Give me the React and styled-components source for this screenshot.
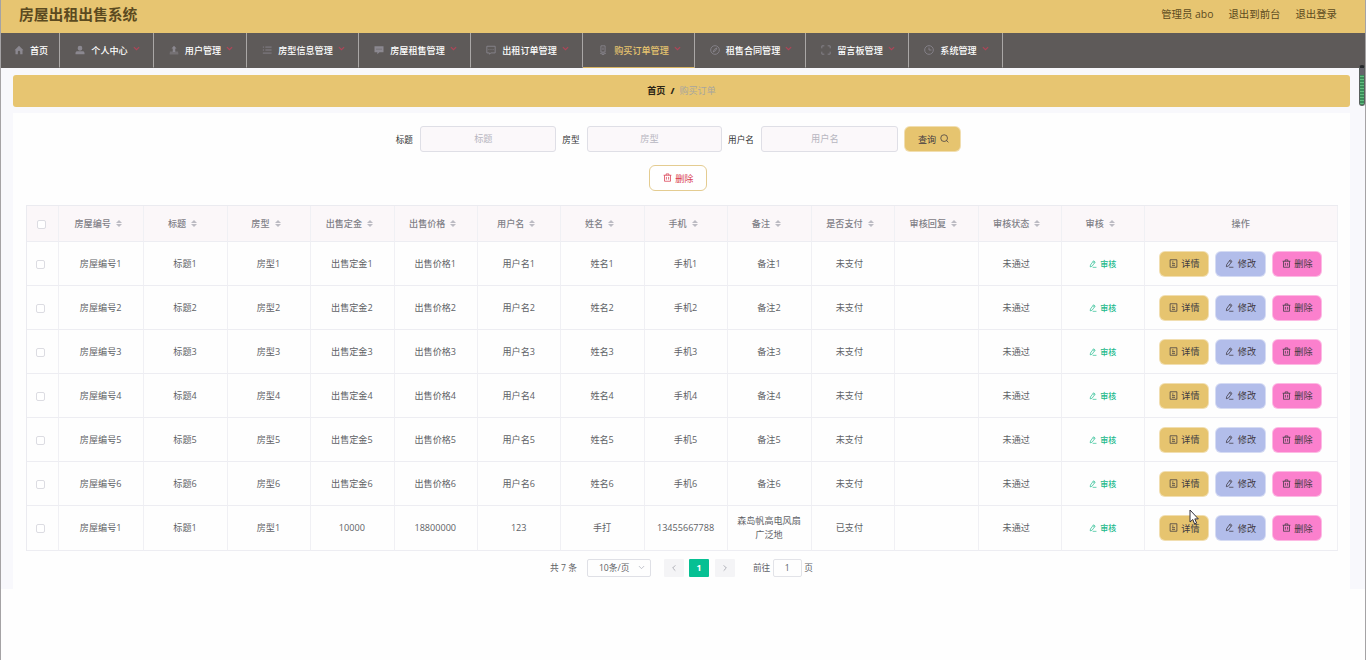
import React from 'react';
import styled, { createGlobalStyle, css } from 'styled-components';

const GlobalStyle = createGlobalStyle`
    * {
        box-sizing: border-box;
    }

    body {
        margin: 0;
        background: #fefefe;
        color: #606266;
        font-family: "Open Sans", "Noto Sans CJK SC", sans-serif;
        font-size: 9.1px;
        overflow: hidden;
    }

    button, input {
        font-family: inherit;
        font-size: inherit;
    }
`;

const menus = [
    { title: '首页', icon: 'home', width: 59 },
    { title: '个人中心', icon: 'user', width: 94 },
    { title: '用户管理', icon: 'upload', width: 93 },
    { title: '房型信息管理', icon: 'list', width: 112 },
    { title: '房屋租售管理', icon: 'chat', width: 112 },
    { title: '出租订单管理', icon: 'message', width: 112 },
    { title: '购买订单管理', icon: 'phone', width: 112, active: true },
    { title: '租售合同管理', icon: 'compass', width: 111 },
    { title: '留言板管理', icon: 'full', width: 103 },
    { title: '系统管理', icon: 'clock', width: 94 }
];

const headers = [
    '房屋编号', '标题', '房型', '出售定金', '出售价格', '用户名', '姓名',
    '手机', '备注', '是否支付', '审核回复', '审核状态', '审核'
];

const orders = [1, 2, 3, 4, 5, 6].map(n => [
    `房屋编号${n}`, `标题${n}`, `房型${n}`, `出售定金${n}`, `出售价格${n}`, `用户名${n}`,
    `姓名${n}`, `手机${n}`, `备注${n}`, '未支付', '', '未通过'
]);

orders.push([
    '房屋编号1', '标题1', '房型1', '10000', '18800000', '123',
    '手打', '13455667788', '森岛帆高电风扇广泛地', '已支付', '', '未通过'
]);

const icons = {
    home: <path fill="currentColor" stroke="none" d="M6 1 .6 6.200h1.200v5h2.800V8.200a1.400 1.400 0 0 1 2.800 0v3h2.800v-5h1.200z" />,
    user: <path fill="currentColor" stroke="none" d="M6 1a2.800 2.800 0 0 1 2.800 2.900A2.800 2.800 0 0 1 6 6.800a2.800 2.800 0 0 1-2.800-2.900A2.800 2.800 0 0 1 6 1zM.6 11V9.600C.6 8 2 7.500 3.500 7.500h5c1.500 0 2.900.5 2.900 2.100V11z" />,
    upload: <path fill="currentColor" stroke="none" d="M6 .8 9 4.200H7.500V8H11v1H1V8h3.500V4.200H3zM.8 10.200h10.400v1H.8z" />,
    list: <path d="M1 2.500h1.500M4 2.500h7.500M1 6h1.500M4 6h7.500M1 9.700h10.500" />,
    chat: <><path fill="currentColor" stroke="none" d="M.6 1.500h10.800v7.200H6.500L4 11V8.700H.6z" /><path stroke="#5e5a59" d="M3 5h1.200M5.400 5h1.200M7.800 5H9" /></>,
    message: <path d="M1 1.500h10v8H6L4 11V9.500H1zM3 5.500h1M5.500 5.500h1M8 5.500h1" />,
    phone: <path d="M3.500 1h5v7.500h-5zM2.500 10H5M9.500 10H7M6 8.500V11M4.500 11.300h3M6 3v3" />,
    compass: <><circle cx="6" cy="6" r="5.200" /><path d="M8.300 3.500 6.700 6.700 3.700 8.500 5.300 5.300z" /></>,
    full: <path d="M1 4V1h3M8 1h3v3M11 8v3H8M4 11H1V8" />,
    clock: <><circle cx="6" cy="6" r="5.200" /><path d="M6 3v3h3" /></>,
    search: <><circle cx="5.500" cy="5.500" r="4.500" /><path d="m8.700 8.700 2.500 2.500" /></>,
    trash: <path d="M.8 3h10.400M2 3v8h8V3M4.200 3V1.200h3.600V3M4.500 5.200v3.600M7.500 5.200v3.600" />,
    doc: <path d="M1.500 1h9v10h-9zM4 4h2M4 6.200h4M4 8.500h4" />,
    edit: <path d="m2.200 7.500 4.600-6.300 2.500 1.800-4.600 6.300-2.900 1zM5.800 2.600l2.500 1.800M5.500 11h5.700" />,
    down: <path d="m1.500 3.500 4.500 4.500 4.500-4.500" />,
    left: <path d="M8 2 4 6l4 4" />,
    right: <path d="m4 2 4 4-4 4" />
};

const Svg = styled.svg`
    width: ${props => props.$size}px;
    height: ${props => props.$size}px;
    flex: none;
    fill: none;
    stroke: currentColor;
    stroke-width: ${props => props.$stroke};
`;

const Icon = ({ name, size = 9, stroke = 1 }) => (
    <Svg viewBox="0 0 12 12" $size={size} $stroke={stroke}>{icons[name]}</Svg>
);

const Page = styled.div`
    height: 660px;
    border-left: 1px solid #a5a3a5;
    border-right: 1px solid #a5a3a5;
    position: relative;
`;

const Header = styled.header`
    height: 33px;
    padding: 0 28px 6px 18px;
    display: flex;
    align-items: center;
    justify-content: space-between;
    background: #e7c571;
    color: #5b4a20;
`;

const Title = styled.h1`
    margin: 0;
    font-size: 14.800px;
    font-weight: 600;
    line-height: 26px;
`;

const UserLinks = styled.div`
    display: flex;
    gap: 15px;
    font-size: 10.400px;
    line-height: 26px;
`;

const Nav = styled.nav`
    height: 35px;
    display: flex;
    background: #5e5a59;
`;

const MenuIcon = styled.span`
    display: flex;
    margin: 1px 6px 0 0;
    color: #8b8890;
`;

const MenuArrow = styled.span`
    display: flex;
    margin: 0 0 2px 5px;
    color: #b04558;
`;

const NavItem = styled.div`
    width: ${props => props.$width}px;
    padding: 0 0 1px 2px;
    display: flex;
    align-items: center;
    justify-content: center;
    border-right: 1px solid #aaa7a6;
    border-bottom: 1px solid ${props => props.$active ? '#d9b562' : '#5e5a59'};
    color: ${props => props.$active ? '#e6c46f' : '#fff'};
    font-weight: 500;
`;

const Main = styled.main`
    height: 521px;
    padding: 7px 15px 0 12px;
    background: #f8f8fc;
`;

const Breadcrumb = styled.div`
    height: 32px;
    padding: 0 0 2px;
    display: flex;
    align-items: center;
    justify-content: center;
    gap: 5px;
    border-radius: 3px;
    background: #e7c571;
    color: #2c2616;
    font-weight: 600;

    span {
        color: #a8a69f;
        font-weight: 400;
    }
`;

const Content = styled.section`
    height: 476px;
    margin-top: 6px;
    padding: 13px 13px 0;
    background: #fefefe;
`;

const SearchForm = styled.form`
    height: 26px;
    display: flex;
    align-items: center;
    justify-content: center;
    color: #303133;
    font-size: 8.600px;
    padding-right: 6px;
`;

const Field = styled.label`
    display: flex;
    align-items: center;
    gap: 7px;
    margin-right: 6.500px;
`;

const Input = styled.input`
    width: ${props => props.$width}px;
    height: 26px;
    padding: 0 9px 2px 0;
    border: 1px solid #dfdfe6;
    border-radius: 3px;
    background: #fbf8fa;
    text-align: center;
    font-size: 9.200px;
    outline: none;

    &::placeholder {
        color: #b7b6c0;
    }
`;

const Button = styled.button`
    width: ${props => props.$width || 50}px;
    height: 26px;
    padding: 0 0 1px 1px;
    display: flex;
    align-items: center;
    justify-content: center;
    gap: 3.500px;
    border: 1px solid ${props => props.$border || 'rgba(255, 255, 255, .45)'};
    border-radius: 6px;
    background: ${props => props.$bg};
    color: ${props => props.$color || '#3f3a42'};
    font-size: 9.100px;
`;

const Actions = styled.div`
    height: 26px;
    margin: 13px 0 14px;
    padding-right: 8px;
    display: flex;
    justify-content: center;
`;

const Table = styled.div`
    width: 1312px;
    border-top: 1px solid #ebebf0;
    border-left: 1px solid #ebebf0;
`;

const Row = styled.div`
    display: grid;
    grid-template-columns: 32px 85.300px repeat(12, 83.430px) 1fr;
    height: ${props => props.$head ? 36 : 44.080}px;
    ${props => props.$head && css`
        background: #fbf7f9;
        color: #7f8087;
        font-weight: 500;
    `}
`;

const Cell = styled.div`
    display: flex;
    align-items: center;
    justify-content: center;
    gap: ${props => props.$gap || 0}px;
    padding: 0 ${props => 7 + (props.$shift || 0)}px 0 6px;
    border-right: 1px solid #f0f0f4;
    border-bottom: 1px solid #ededf2;
    line-height: 14px;
    text-align: center;
`;

const Check = styled.span`
    width: 9px;
    height: 9px;
    margin: 1px 3px 0 0;
    border: 1px solid #dcdce2;
    border-radius: 2px;
    background: #fff;
    ${props => props.$head && 'margin-right: 1px;'}
`;

const SortMark = styled.span`
    margin-left: 5px;
    display: flex;
    flex-direction: column;
    gap: 1.500px;

    &::before, &::after {
        content: '';
        border: 3px solid transparent;
    }

    &::before {
        border-top: 0;
        border-bottom-color: #bcbbc3;
    }

    &::after {
        border-bottom: 0;
        border-top-color: #bcbbc3;
    }
`;

const Audit = styled.span`
    display: flex;
    align-items: center;
    gap: 3px;
    color: #1bb98b;
    font-size: 8px;
    font-weight: 500;
`;

const Pagination = styled.div`
    height: 18px;
    margin-top: 8px;
    display: flex;
    align-items: center;
    justify-content: center;
    font-size: 8.700px;
`;

const Select = styled.div`
    width: 64px;
    height: 18px;
    margin: 0 13px 0 10px;
    padding: 0 5px 0 11px;
    display: flex;
    align-items: center;
    justify-content: space-between;
    border: 1px solid #dfe0e6;
    border-radius: 2px;

    svg {
        color: #b4b7c0;
    }
`;

const PageButton = styled.span`
    width: 20px;
    height: 18px;
    margin-right: ${props => props.$gap || 6}px;
    display: flex;
    align-items: center;
    justify-content: center;
    border-radius: 1px;
    background: ${props => props.$active ? '#06c093' : '#f4f4f6'};
    color: ${props => props.$active ? '#fff' : '#a9aab2'};
    font-weight: 700;
`;

const Jump = styled.div`
    margin-left: 12px;
    display: flex;
    align-items: center;
    gap: 2.500px;

    span {
        width: 29px;
        height: 18px;
        border: 1px solid #e2e3e8;
        border-radius: 2px;
        line-height: 16px;
        text-align: center;
    }
`;

const ScrollThumb = styled.div`
    position: absolute;
    top: 65px;
    right: 0;
    width: 6px;
    height: 41px;
    border: 1px solid #59605e;
    border-top: 3px solid #26292b;
    border-radius: 3px;
    background: linear-gradient(#64636a 7px, transparent 7px),
        repeating-linear-gradient(#3b8d5a 0 2px, #62bd80 2px 3px);
`;

const Cursor = styled.svg`
    position: absolute;
    top: 509px;
    left: 1188px;
    width: 10px;
    height: 16px;
`;

const App = () => (
    <>
        <GlobalStyle />
        <Page>
            <Header>
                <Title>房屋出租出售系统</Title>
                <UserLinks>
                    <span>管理员 abo</span>
                    <span>退出到前台</span>
                    <span>退出登录</span>
                </UserLinks>
            </Header>
            <Nav>
                {menus.map(menu => (
                    <NavItem key={menu.title} $width={menu.width} $active={menu.active}>
                        <MenuIcon><Icon name={menu.icon} size={10} /></MenuIcon>
                        {menu.title}
                        {menu.icon !== 'home' && <MenuArrow><Icon name="down" size={7} stroke={2} /></MenuArrow>}
                    </NavItem>
                ))}
            </Nav>
            <Main>
                <Breadcrumb>首页 <b>/</b> <span>购买订单</span></Breadcrumb>
                <Content>
                    <SearchForm>
                        <Field>标题<Input $width={136} placeholder="标题" /></Field>
                        <Field>房型<Input $width={135} placeholder="房型" /></Field>
                        <Field>用户名<Input $width={137} placeholder="用户名" /></Field>
                        <Button type="button" $width={57} $bg="#e6c46f">查询<Icon name="search" /></Button>
                    </SearchForm>
                    <Actions>
                        <Button $width={58} $bg="#fff" $border="#e4cc91" $color="#d93c50">
                            <Icon name="trash" />删除
                        </Button>
                    </Actions>
                    <Table>
                        <Row $head>
                            <Cell><Check $head /></Cell>
                            {headers.map(header => <Cell key={header} $shift={5}>{header}<SortMark /></Cell>)}
                            <Cell>操作</Cell>
                        </Row>
                        {orders.map((order, i) => (
                            <Row key={i}>
                                <Cell><Check /></Cell>
                                {order.map((value, j) => <Cell key={j} $shift={j > 8 ? 6 : 0}>{value}</Cell>)}
                                <Cell><Audit><Icon name="edit" size={8} />审核</Audit></Cell>
                                <Cell $gap={6} $shift={1}>
                                    <Button $bg="#e6c46f"><Icon name="doc" />详情</Button>
                                    <Button $bg="#b2bdea" $width={51}><Icon name="edit" />修改</Button>
                                    <Button $bg="#fb80cd"><Icon name="trash" />删除</Button>
                                </Cell>
                            </Row>
                        ))}
                    </Table>
                    <Pagination>
                        共 7 条
                        <Select>10条/页<Icon name="down" size={7} stroke={1.4} /></Select>
                        <PageButton $gap={5}><Icon name="left" size={8} stroke={1.4} /></PageButton>
                        <PageButton $active>1</PageButton>
                        <PageButton><Icon name="right" size={8} stroke={1.4} /></PageButton>
                        <Jump>前往<span>1</span>页</Jump>
                    </Pagination>
                </Content>
            </Main>
            <ScrollThumb />
            <Cursor viewBox="0 0 10 16">
                <path d="M1 1v12l2.800-2.500L5.600 15l2-.9-1.800-4.200H9.300z" fill="#fff" stroke="#33313c" />
            </Cursor>
        </Page>
    </>
);

export default App;
